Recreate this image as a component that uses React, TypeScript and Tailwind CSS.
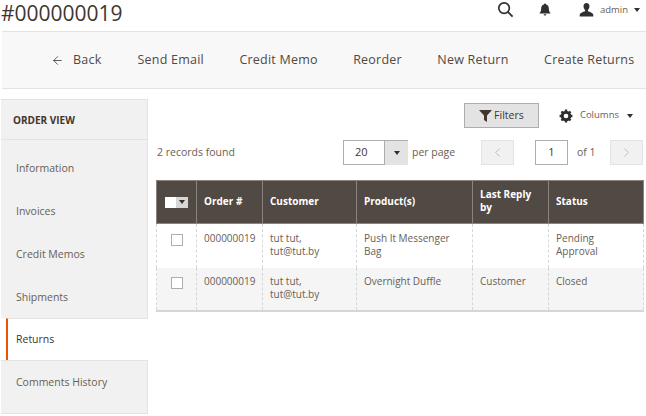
import React from 'react';
import { ArrowLeft, ChevronLeft, ChevronRight } from 'lucide-react';

const actions = ['Send Email', 'Credit Memo', 'Reorder', 'New Return', 'Create Returns'];
const tabs = ['Information', 'Invoices', 'Credit Memos', 'Shipments'];

const rows = [
  { order: '000000019', customer: ['tut tut,', 'tut@tut.by'], product: ['Push It Messenger', 'Bag'], reply: '', status: ['Pending', 'Approval'] },
  { order: '000000019', customer: ['tut tut,', 'tut@tut.by'], product: ['Overnight Duffle'], reply: 'Customer', status: ['Closed'] },
];

function Caret({ className = '' }: { className?: string }) {
  return <span className={`block w-0 h-0 border-x-[3px] border-x-transparent border-t-[4px] border-t-[#303030] ${className}`} />;
}

export default function App() {
  return (
    <div className="w-[646px] h-[416px] overflow-hidden bg-white text-[#41362f] text-[10.5px] font-['Open_Sans',sans-serif]">
      {/* Header */}
      <div className="h-[31px] flex items-start">
        <h1 className="ml-[1px] text-[21px] leading-[26px] text-[#41362f]">#000000019</h1>
        <div className="ml-auto flex items-center pt-[1px]">
          <svg width="17" height="17" viewBox="0 0 18 18" fill="none" stroke="#303030" className="mr-[25px]">
            <circle cx="7.5" cy="7.5" r="5.6" strokeWidth="1.8" />
            <path d="M11.5 11.5 L16.5 16.5" strokeWidth="2" />
          </svg>
          <svg width="12" height="13" viewBox="0 0 14 15" fill="#303030" className="mr-[28px]">
            <path d="M7 0.5c.8 0 1.2.5 1.3 1.1C10.500 2.200 11.500 4 11.500 6.500c0 2.500.7 3.800 1.800 5v.8H.7v-.8C1.800 10.300 2.500 9 2.500 6.500 2.500 4 3.500 2.200 5.700 1.600 5.800 1 6.200.5 7 .5z" />
            <path d="M5.500 13h3c0 .9-.6 1.500-1.500 1.500S5.500 13.900 5.500 13z" />
          </svg>
          <svg width="15" height="14" viewBox="0 0 15 15" fill="#303030" className="mr-[6px]">
            <path d="M7.500 0C5.500 0 4.300 1.500 4.300 3.600c0 1.600.7 3.100 1.700 3.900v1.300C3.500 9.600.4 10.600.2 12.800V14.500h14.600v-1.700c-.2-2.200-3.300-3.200-5.800-4V7.500c1-.8 1.700-2.300 1.700-3.900C10.700 1.500 9.500 0 7.500 0z" />
          </svg>
          <span className="text-[9.5px] leading-[16px] text-[#676056] mr-[6px]">admin</span>
          <Caret className="mr-[6px]" />
        </div>
      </div>

      {/* Action bar */}
      <div className="ml-[2px] h-[58px] flex items-center bg-[#f8f8f8] border-y border-[#e3e3e3] text-[12.5px] tracking-[0.22px] text-[#514943]">
        <ArrowLeft size={13} strokeWidth={1.5} className="ml-[49px] mr-[9px] text-[#41362f]" />
        <span className="mr-[36px]">Back</span>
        {actions.map((a, i) => (
          <span key={a} className={i === actions.length - 1 ? '' : 'mr-[35.5px]'}>{a}</span>
        ))}
      </div>

      <div className="flex mt-[10px]">
        {/* Sidebar */}
        <div className="ml-[1px] w-[147px] shrink-0 text-[#676056]">
          <div className="h-[41px] flex items-center pl-[12px] pt-[1px] bg-[#f1f1f1] border-y border-r border-[#e3e3e3] font-bold text-[#41362f] text-[10px]">ORDER VIEW</div>
          <div className="bg-[#f1f1f1] border-r border-[#e3e3e3] h-[178px] flex flex-col pt-[7px]">
            {tabs.map(t => (
              <div key={t} className="h-[43px] shrink-0 flex items-center pl-[15px]">{t}</div>
            ))}
          </div>
          <div className="h-[42px] ml-[5px] flex items-center pl-[8px] bg-white border-l-2 border-[#eb5202] border-t border-t-[#e3e3e3] text-[#41362f]">Returns</div>
          <div className="h-[54px] flex items-center pl-[15px] pb-[9px] bg-[#f1f1f1] border-y border-r border-[#e3e3e3]">Comments History</div>
        </div>

        {/* Grid */}
        <div className="ml-[8px] w-[487px]">
          <div className="h-[33px] flex items-center justify-end">
            <button className="w-[75px] h-[25px] flex items-center justify-center gap-[2px] bg-[#e3e3e3] border border-[#adadad] text-[#41362f] text-[10.5px]">
              <svg width="13" height="12" viewBox="0 0 13 12" fill="#41362f"><path d="M0 0h13L8 5.500V12L5 10V5.500z" /></svg>
              Filters
            </button>
            <svg width="14" height="14" viewBox="0 0 24 24" fill="none" className="ml-[20px]">
              <circle cx="12" cy="12" r="6.500" stroke="#303030" strokeWidth="5" />
              <path d="M12 1v22M1 12h22M4.200 4.200l15.600 15.600M19.800 4.200L4.200 19.800" stroke="#303030" strokeWidth="4" />
              <circle cx="12" cy="12" r="4" fill="#fff" />
            </svg>
            <span className="ml-[7px] text-[#676056] text-[9.5px]">Columns</span>
            <Caret className="ml-[8px] mr-[10px]" />
          </div>

          <div className="mt-[8px] h-[25px] flex items-center">
            <span className="ml-[1px] text-[#676056] w-[186px]">2 records found</span>
            <div className="flex h-[25px]">
              <div className="w-[41px] flex items-center pl-[11px] border border-[#adadad] border-r-0 text-[#41362f] text-[11px]">20</div>
              <div className="w-[24px] flex items-center justify-center bg-[#e3e3e3] border-t border-l border-[#adadad]"><Caret /></div>
            </div>
            <span className="ml-[4px] text-[#676056] text-[10.5px] w-[69px]">per page</span>
            <div className="w-[33px] h-[25px] flex items-center justify-center bg-[#f1f1f1] border border-[#e3e3e3] text-[#adadad]"><ChevronLeft size={15} strokeWidth={1.2} /></div>
            <div className="ml-[21px] w-[33px] h-[25px] flex items-center justify-center border border-[#adadad] text-[#41362f] text-[11px]">1</div>
            <span className="ml-[9px] text-[#676056] text-[10.5px]">of 1</span>
            <div className="ml-auto w-[33px] h-[25px] flex items-center justify-center bg-[#f1f1f1] border border-[#e3e3e3] text-[#adadad]"><ChevronRight size={15} strokeWidth={1.2} /></div>
          </div>

          <table className="mt-[15px] w-[487px] table-fixed border-collapse">
            <colgroup>
              <col className="w-[40px]" />
              <col className="w-[66px]" />
              <col className="w-[94px]" />
              <col className="w-[116px]" />
              <col className="w-[76px]" />
              <col className="w-[95px]" />
            </colgroup>
            <thead>
              <tr className="h-[43px] bg-[#514943] text-white text-[10px] font-bold text-left leading-[13px]">
                <th className="border border-[#8a837e]">
                  <div className="flex justify-center">
                    <span className="w-[11px] h-[11px] bg-white" />
                    <span className="w-[12px] h-[11px] bg-[#d6d6d6] flex items-center justify-center"><Caret /></span>
                  </div>
                </th>
                <th className="border border-[#8a837e] px-[7px] pb-[2px]">Order #</th>
                <th className="border border-[#8a837e] px-[7px] pb-[2px]">Customer</th>
                <th className="border border-[#8a837e] px-[7px] pb-[2px]">Product(s)</th>
                <th className="border border-[#8a837e] px-[7px] pb-[2px]">Last Reply by</th>
                <th className="border border-[#8a837e] px-[7px] pb-[2px]">Status</th>
              </tr>
            </thead>
            <tbody className="text-[10px] leading-[13px] text-[#676056]">
              {rows.map((r, i) => (
                <tr key={i} className={i === rows.length - 1 ? 'h-[43px] bg-[#f5f5f5] border-b-2 border-[#d6d6d6]' : 'h-[44px] bg-white'}>
                  <td className={`border-x border-dashed border-[#d6d6d6] align-top ${i === 0 ? 'pt-[10px]' : 'pt-[9px]'}`}>
                    <span className="block mx-auto w-[12px] h-[12px] border border-[#adadad] bg-white" />
                  </td>
                  {[[r.order], r.customer, r.product, [r.reply], r.status].map((lines, c) => (
                    <td key={c} className={`border-x border-dashed border-[#d6d6d6] align-top px-[7px] ${i === 0 ? 'pt-[8px]' : 'pt-[7px]'}`}>
                      {lines.map(l => <div key={l}>{l}</div>)}
                    </td>
                  ))}
                </tr>
              ))}
            </tbody>
          </table>
        </div>
      </div>
    </div>
  );
}
